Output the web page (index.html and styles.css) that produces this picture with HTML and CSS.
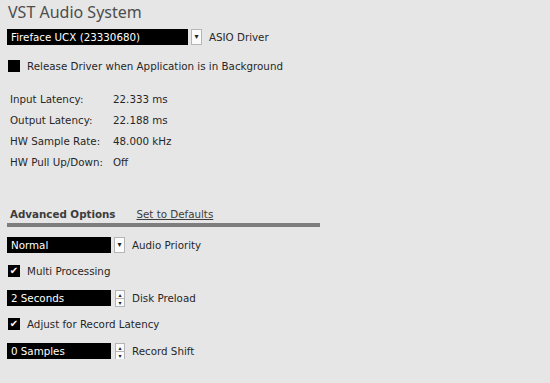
FILE: index.html
```html
<!DOCTYPE html>
<html lang="en">
<head>
    <meta charset="UTF-8">
    <title>VST Audio System</title>
    <link rel="stylesheet" href="styles.css">
</head>
<body>
<div class="panel">
    <h1>VST Audio System</h1>

    <div class="row">
        <div class="select wide">Fireface UCX (23330680)</div>
        <span class="arrow">&#9662;</span>
        <span class="label">ASIO Driver</span>
    </div>

    <div class="row check-row first">
        <span class="check"></span>
        <span>Release Driver when Application is in Background</span>
    </div>

    <div class="info">
        <div class="info-row"><span class="key">Input Latency:</span><span>22.333 ms</span></div>
        <div class="info-row"><span class="key">Output Latency:</span><span>22.188 ms</span></div>
        <div class="info-row"><span class="key">HW Sample Rate:</span><span>48.000 kHz</span></div>
        <div class="info-row"><span class="key">HW Pull Up/Down:</span><span>Off</span></div>
    </div>

    <div class="tabs">
        <span class="tab active">Advanced Options</span>
        <span class="tab link">Set to Defaults</span>
    </div>

    <div class="row">
        <div class="select small">Normal</div>
        <span class="arrow">&#9662;</span>
        <span class="label">Audio Priority</span>
    </div>

    <div class="row check-row">
        <span class="check on">&#10004;</span>
        <span>Multi Processing</span>
    </div>

    <div class="row">
        <div class="select small">2 Seconds</div>
        <span class="spin"><i>&#9652;</i><i>&#9662;</i></span>
        <span class="label">Disk Preload</span>
    </div>

    <div class="row check-row">
        <span class="check on">&#10004;</span>
        <span>Adjust for Record Latency</span>
    </div>

    <div class="row">
        <div class="select small">0 Samples</div>
        <span class="spin"><i>&#9652;</i><i>&#9662;</i></span>
        <span class="label">Record Shift</span>
    </div>
</div>
</body>
</html>
```

FILE: styles.css
```css
body {
    margin: 0;
    background-color: #e6e6e6;
    font-family: "DejaVu Sans", sans-serif;
    font-size: 10.3px;
    color: #262626;
}

.panel {
    padding: 2px 0 0 7px;
    display: flex;
    flex-direction: column;
}

h1 {
    margin: 0 0 7px 1px;
    font-family: "Noto Sans", sans-serif;
    font-size: 16px;
    font-weight: normal;
    color: #4d4d4d;
    line-height: 20px;
}

.row {
    display: flex;
    align-items: center;
    height: 16px;
}

.select {
    height: 16px;
    line-height: 16px;
    background-color: #000;
    color: #fff;
    padding-left: 4px;
    box-sizing: border-box;
}
.select.wide { width: 181px; }
.select.small { width: 104px; }

.arrow {
    width: 11px;
    height: 16px;
    margin-left: 3px;
    background-color: #fbfbfb;
    border: 1px solid #b5b5b5;
    box-sizing: border-box;
    font-size: 8px;
    line-height: 14px;
    text-align: center;
    color: #222;
}

.spin {
    width: 10px;
    height: 17px;
    margin-left: 4px;
    background-color: #fbfbfb;
    border: 1px solid #b5b5b5;
    box-sizing: border-box;
    display: flex;
    flex-direction: column;
    font-size: 6px;
    line-height: 7px;
    text-align: center;
    color: #222;
}
.spin i {
    font-style: normal;
    flex: 1;
}
.spin i + i {
    border-top: 1px solid #b5b5b5;
}

.label {
    margin-left: 7px;
}

.check-row {
    margin-top: 10px;
}
.check-row.first {
    margin-top: 13px;
}

.check {
    width: 12px;
    height: 12px;
    margin: 0 7px 0 1px;
    background-color: #000;
    color: #fff;
    font-size: 10px;
    line-height: 12px;
    text-align: center;
}

.info {
    margin-top: 19px;
    padding-left: 3px;
    display: flex;
    flex-direction: column;
    gap: 8px;
}
.info-row {
    display: flex;
    height: 13px;
    line-height: 13px;
}
.key {
    width: 103px;
}

.tabs {
    margin-top: 39px;
    width: 310px;
    border-bottom: 4px solid #7d7d7d;
    padding: 0 0 3px 3px;
    display: flex;
    gap: 21px;
    margin-bottom: 10px;
}
.tab.active {
    font-weight: bold;
    color: #3c3c3c;
}
.tab.link {
    text-decoration: underline;
    color: #3c3c3c;
}

.row + .row:not(.check-row) {
    margin-top: 11px;
}
```
